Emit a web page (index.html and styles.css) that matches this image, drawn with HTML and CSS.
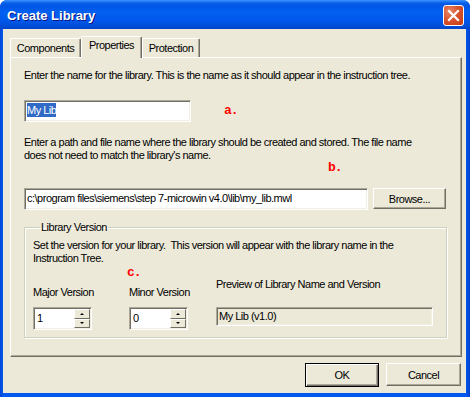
FILE: index.html
```html
<!DOCTYPE html>
<html lang="en">
<head>
  <meta charset="UTF-8" />
  <title>Create Library</title>
  <link rel="stylesheet" href="styles.css">
</head>
<body>
  <div class="window">
    <div class="titlebar">
      <span class="title">Create Library</span>
      <span class="close">
        <svg width="13" height="13" viewBox="0 0 13 13">
          <path d="M2 2 L11 11 M11 2 L2 11" stroke="#fff" stroke-width="2.2" stroke-linecap="square"/>
        </svg>
      </span>
    </div>

    <div class="client">
      <div class="tabs">
        <div class="tab tab-components">Components</div>
        <div class="tab tab-properties active">Properties</div>
        <div class="tab tab-protection">Protection</div>
      </div>

      <div class="panel">
        <p class="hint">Enter the name for the library. This is the name as it should appear in the instruction tree.</p>

        <div class="name-row">
          <div class="field name-field"><span class="selected">My Lib</span></div>
          <span class="mark mark-a">a.</span>
        </div>

        <p class="hint hint-two">Enter a path and file name where the library should be created and stored. The file name<br>does not need to match the library's name.</p>

        <div class="mark mark-b">b.</div>

        <div class="path-row">
          <div class="field path-field">c:\program files\siemens\step 7-microwin v4.0\lib\my_lib.mwl</div>
          <button class="btn browse">Browse...</button>
        </div>

        <fieldset class="group">
          <legend>Library Version</legend>
          <p class="hint group-text">Set the version for your library.&nbsp; This version will appear with the library name in the<br>Instruction Tree.</p>
          <div class="mark mark-c">c.</div>
          <div class="version-row">
            <div class="col col-major">
              <span class="label">Major Version</span>
              <div class="spin">
                <span class="spin-val">1</span>
                <span class="spin-btns">
                  <span class="spin-btn"><i class="arrow up"></i></span>
                  <span class="spin-btn"><i class="arrow down"></i></span>
                </span>
              </div>
            </div>
            <div class="col col-minor">
              <span class="label">Minor Version</span>
              <div class="spin">
                <span class="spin-val">0</span>
                <span class="spin-btns">
                  <span class="spin-btn"><i class="arrow up"></i></span>
                  <span class="spin-btn"><i class="arrow down"></i></span>
                </span>
              </div>
            </div>
            <div class="col col-preview">
              <span class="label">Preview of Library Name and Version</span>
              <div class="field preview">My Lib (v1.0)</div>
            </div>
          </div>
        </fieldset>
      </div>

      <div class="actions">
        <button class="btn default">OK</button>
        <button class="btn cancel">Cancel</button>
      </div>
    </div>
  </div>
</body>
</html>
```

FILE: styles.css
```css
* {
  box-sizing: border-box;
}
body {
  margin: 0;
  background: #fff;
  font-family: "Liberation Sans", Arial, sans-serif;
  font-size: 11px;
  letter-spacing: -0.5px;
  color: #000;
}
.window {
  width: 470px;
  height: 397px;
  display: flex;
  flex-direction: column;
  background: linear-gradient(to right, #0046d8 0, #0058ee 3px, #0058ee 466px, #0040cc 470px);
  border-radius: 7px 7px 0 0;
  overflow: hidden;
}
.titlebar {
  height: 29px;
  flex: none;
  display: flex;
  align-items: center;
  justify-content: space-between;
  padding: 2px 6px 0 7px;
  background: linear-gradient(to bottom, #3d95ff 0, #0a5fe8 3px, #0055e5 6px, #0260f0 12px, #0058ec 20px, #004ed8 26px, #0043c9 29px);
}
.title {
  color: #fff;
  font-weight: bold;
  font-size: 13px;
  letter-spacing: 0;
  text-shadow: 1px 1px 0 #0a1883;
}
.close {
  width: 21px;
  height: 21px;
  display: flex;
  align-items: center;
  justify-content: center;
  border: 1px solid #fff;
  border-radius: 3px;
  background: radial-gradient(circle at 30% 30%, #e9876a 0, #d9552f 45%, #c13a14 100%);
}
.client {
  flex: 1;
  margin: 0 4px 4px 3px;
  padding: 7px 4px 0 7px;
  background: #ece9d8;
}
.tabs {
  display: flex;
  align-items: flex-end;
  height: 21px;
}
.tab {
  height: 19px;
  padding-top: 3px;
  text-align: center;
  background: #ece9d8;
  border: 1px solid #fff;
  border-right: 1px solid #716f64;
  border-bottom: none;
  border-radius: 2px 2px 0 0;
  box-shadow: inset -1px 0 0 #aca899;
}
.tab-components {
  width: 71px;
}
.tab-properties {
  width: 61px;
}
.tab-protection {
  width: 58px;
}
.tab.active {
  height: 22px;
  margin-bottom: -1px;
  padding-top: 2px;
}
.panel {
  width: 452px;
  height: 300px;
  padding: 11px 0 0 13px;
  border: 1px solid #fff;
  border-right-color: #716f64;
  border-bottom-color: #716f64;
  box-shadow: inset -1px -1px 0 #aca899;
}
.hint {
  margin: 0;
  line-height: 13px;
}
.name-row {
  display: flex;
  align-items: center;
  margin-top: 18px;
}
.field {
  height: 22px;
  padding: 3px 0 0 2px;
  background: #fff;
  border: 1px solid;
  border-color: #aca899 #fff #fff #aca899;
  box-shadow: inset 1px 1px 0 #716f64, inset -1px -1px 0 #f1efe2;
  white-space: nowrap;
  overflow: hidden;
}
.name-field {
  width: 167px;
}
.selected {
  background: #316ac5;
  color: #fff;
  padding: 1px 0;
}
.mark {
  font-family: "Liberation Mono", monospace;
  font-weight: bold;
  font-size: 13px;
  letter-spacing: -1px;
  color: #ff0000;
  line-height: 10px;
  height: 10px;
}
.mark-a {
  margin-left: 33px;
}
.hint-two {
  margin-top: 14px;
}
.mark-b {
  margin-top: 1px;
  padding-left: 304px;
}
.path-row {
  display: flex;
  align-items: flex-start;
  gap: 5px;
  margin-top: 15px;
}
.path-field {
  width: 344px;
}
.btn {
  font: inherit;
  letter-spacing: inherit;
  color: #000;
  background: #ece9d8;
  border: 1px solid;
  border-color: #fff #716f64 #716f64 #fff;
  box-shadow: inset -1px -1px 0 #aca899;
  padding: 0;
}
.browse {
  width: 73px;
  height: 21px;
}
.group {
  width: 423px;
  margin: 11px 0 0;
  padding: 5px 0 7px 8px;
  border: 1px solid #d0d0bf;
  box-shadow: 1px 1px 0 #fff, inset 1px 1px 0 #fff;
}
.group legend {
  padding: 0 1px;
  margin-left: 7px;
  line-height: 13px;
}
.group-text {
  margin-top: 0;
}
.mark-c {
  margin-top: 3px;
  padding-left: 94px;
}
.version-row {
  display: flex;
  align-items: flex-start;
}
.col {
  display: flex;
  flex-direction: column;
  align-items: flex-start;
}
.label {
  line-height: 13px;
}
.col-major {
  width: 96px;
}
.col-minor {
  width: 87px;
}
.col-major .label,
.col-minor .label {
  margin: 8px 0 8px;
}
.col-preview .label {
  margin-bottom: 16px;
}
.spin {
  width: 59px;
  height: 23px;
  display: flex;
  background: #fff;
  border: 1px solid;
  border-color: #aca899 #fff #fff #aca899;
  box-shadow: inset 1px 1px 0 #716f64, inset -1px -1px 0 #f1efe2;
  padding: 1px;
}
.spin-val {
  flex: 1;
  padding: 3px 0 0 2px;
}
.spin-btns {
  width: 16px;
  display: flex;
  flex-direction: column;
}
.spin-btn {
  flex: 1;
  display: flex;
  align-items: center;
  justify-content: center;
  background: #ece9d8;
  border: 1px solid;
  border-color: #fff #716f64 #716f64 #fff;
}
.arrow {
  width: 0;
  height: 0;
  border-left: 2px solid transparent;
  border-right: 2px solid transparent;
}
.arrow.up {
  border-bottom: 2px solid #000;
}
.arrow.down {
  border-top: 2px solid #000;
}
.preview {
  width: 217px;
  height: 19px;
  padding-top: 2px;
  background: #ece9d8;
}
.actions {
  display: flex;
  justify-content: flex-end;
  gap: 7px;
  margin-top: 6px;
  padding-right: 1px;
}
.default {
  width: 74px;
  height: 24px;
  border: 1px solid #000;
  box-shadow: inset 1px 1px 0 #fff, inset -1px -1px 0 #716f64, inset -2px -2px 0 #aca899;
}
.cancel {
  width: 75px;
  height: 23px;
}
```
